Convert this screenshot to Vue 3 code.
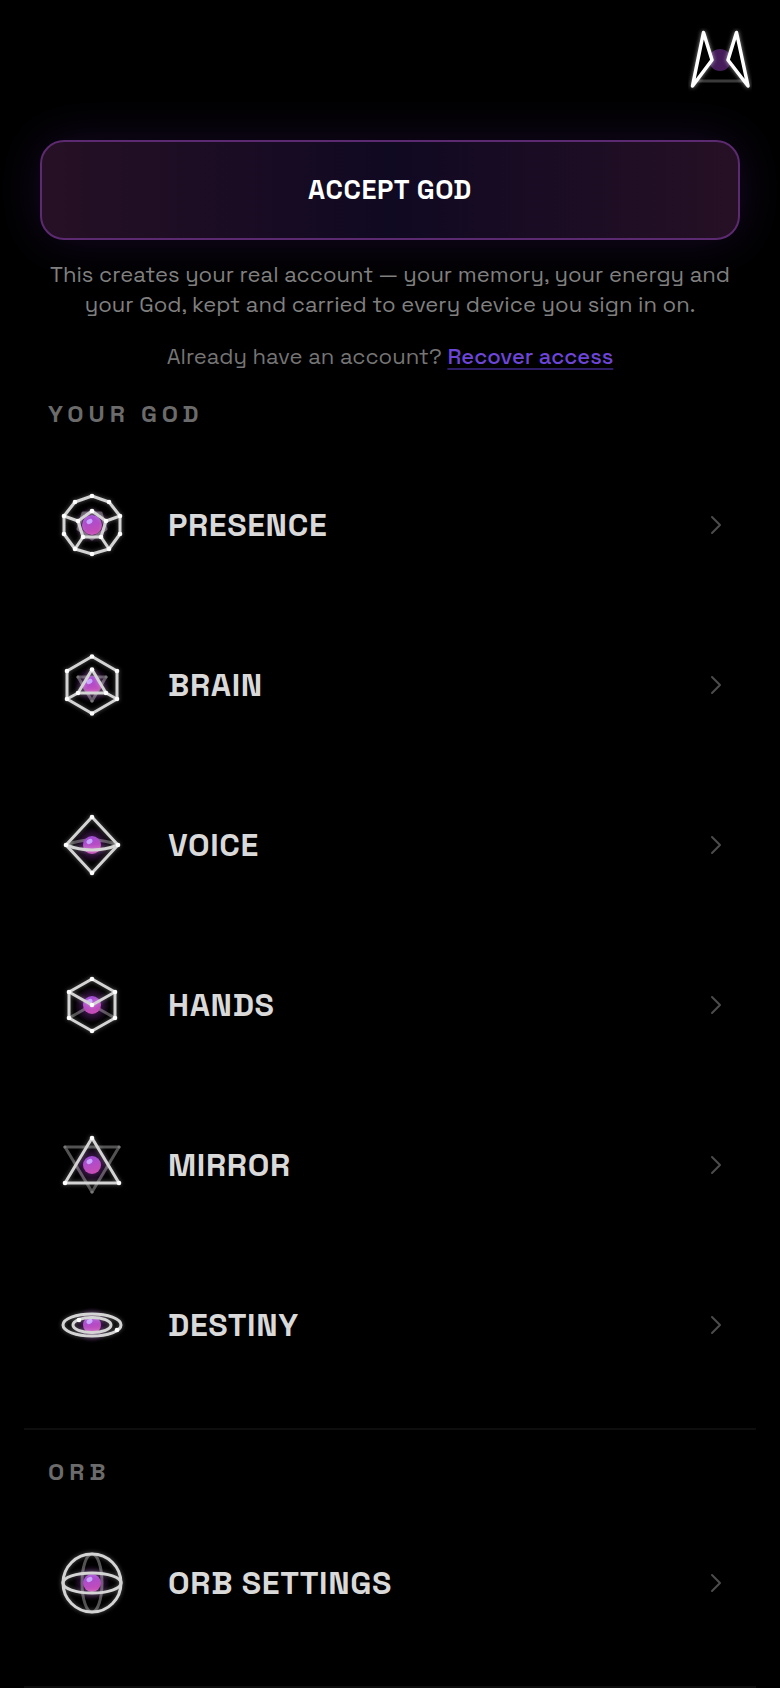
<script setup>
const dots = (list) => list.map(([x, y]) => ({ x, y }))

const godItems = [
  {
    label: 'PRESENCE',
    core: 10,
    faint: ['M0 14 -14 4 -9 -12 9 -12 14 4Z'],
    lines: [
      'M0 -29 17 -23 28 -9 28 9 17 24 0 29 -17 24 -28 9 -28 -9 -17 -23Z',
      'M0 -14 14 -4 9 12 -9 12 -14 -4Z',
      'M14 -4 28 -9M-14 -4 -28 -9M9 12 17 24M-9 12 -17 24'
    ],
    dots: dots([[0, -29], [17, -23], [28, -9], [28, 9], [17, 24], [0, 29], [-17, 24], [-28, 9], [-28, -9], [-17, -23], [0, -14], [14, -4], [9, 12], [-9, 12], [-14, -4]])
  },
  {
    label: 'BRAIN',
    core: 9,
    faint: ['M-14 -8 14 -8 0 16Z'],
    lines: [
      'M0 -28.500 25 -14 25 14 0 28.500 -25 14 -25 -14Z',
      'M0 -15.500 14 8 -14 8Z',
      'M14 8 25 14M-14 8 -25 14'
    ],
    dots: dots([[0, -28.5], [25, -14], [25, 14], [0, 28.5], [-25, 14], [-25, -14], [0, -15.5], [14, 8], [-14, 8]]),
    faintDots: dots([[-14, -8], [14, -8], [0, 16]])
  },
  {
    label: 'VOICE',
    core: 9,
    faint: ['M-26 0Q0 -10 26 0'],
    lines: ['M0 -28 26 0 0 28 -26 0Z', 'M-26 0Q0 10 26 0'],
    dots: dots([[0, -28], [26, 0], [0, 28], [-26, 0]])
  },
  {
    label: 'HANDS',
    core: 9,
    faint: ['M0 0 -23 13M0 0 23 13'],
    lines: ['M0 -26 23 -13 23 13 0 26 -23 13 -23 -13Z', 'M-23 -13 0 0 23 -13'],
    dots: dots([[0, -26], [23, -13], [23, 13], [0, 26], [-23, 13], [-23, -13], [0, 0]])
  },
  {
    label: 'MIRROR',
    core: 9,
    faint: ['M-27 -18 27 -18 0 27Z'],
    lines: ['M0 -27 27 18 -27 18Z'],
    dots: dots([[0, -27], [27, 18], [-27, 18]]),
    faintDots: dots([[-27, -18], [27, -18], [0, 27]])
  },
  {
    label: 'DESTINY',
    core: 9,
    faint: [],
    lines: ['M-29 0A29 11 0 1 0 29 0A29 11 0 1 0 -29 0Z', 'M-19 0A19 7.500 0 1 0 19 0A19 7.500 0 1 0 -19 0Z'],
    dots: dots([[25, 5], [-13, -5]])
  }
]

const orbItems = [
  {
    label: 'ORB SETTINGS',
    core: 9,
    faint: ['M0 -29A10 29 0 1 0 0 29A10 29 0 1 0 0 -29Z'],
    lines: ['M0 -29A29 29 0 1 0 0 29A29 29 0 1 0 0 -29Z', 'M-29 0A29 10 0 1 0 29 0A29 10 0 1 0 -29 0Z'],
    dots: []
  }
]

const sections = [
  { title: 'YOUR GOD', items: godItems },
  { title: 'ORB', items: orbItems }
]
</script>

<template>
  <main class="page">
    <header class="top">
      <button class="logo" type="button" aria-label="Home">
        <svg viewBox="0 0 64 64" width="64" height="64" aria-hidden="true">
          <defs>
            <linearGradient id="core" x1="0" y1="0" x2="0.300" y2="1">
              <stop offset="0" stop-color="#9c4cdc" />
              <stop offset="1" stop-color="#c64cb6" />
            </linearGradient>
            <radialGradient id="halo">
              <stop offset="0.400" stop-color="#9a3cc0" stop-opacity="0.400" />
              <stop offset="1" stop-color="#9a3cc0" stop-opacity="0" />
            </radialGradient>
          </defs>
          <path d="M8 53H56" stroke="#3a3a3a" stroke-width="3" />
          <circle cx="32" cy="32" r="11" fill="#451c59" />
          <g class="logo-wings" fill="#000" stroke="#fff" stroke-width="3.500" stroke-linejoin="round">
            <path d="M15.500 4.500 24 32 4.500 58Z" />
            <path d="M48.500 4.500 40 32 60 58Z" />
          </g>
        </svg>
      </button>
    </header>

    <section class="account">
      <button class="accept" type="button">ACCEPT GOD</button>
      <p class="note">This creates your real account — your memory, your energy and your God, kept and carried to every device you sign in on.</p>
      <p class="recover">Already have an account? <a href="#recover">Recover access</a></p>
    </section>

    <section v-for="section in sections" :key="section.title" class="group">
      <h2>{{ section.title }}</h2>
      <button v-for="item in section.items" :key="item.label" class="row" type="button">
        <svg class="glyph" viewBox="-36 -36 72 72" width="72" height="72" aria-hidden="true">
          <circle r="18" fill="url(#halo)" />
          <path v-for="d in item.faint" :key="d" :d="d" class="faint" />
          <circle :r="item.core" fill="url(#core)" />
          <ellipse cx="-2.500" cy="-3.500" rx="3.200" ry="2.200" transform="rotate(-30 -2.500 -3.500)" fill="#c9a5ff" />
          <g class="wire">
            <path v-for="d in item.lines" :key="d" :d="d" />
            <circle v-for="(p, i) in item.dots" :key="i" :cx="p.x" :cy="p.y" r="2.300" />
          </g>
          <circle v-for="(p, i) in item.faintDots" :key="i" :cx="p.x" :cy="p.y" r="1.600" fill="#777" />
        </svg>
        <span class="label">{{ item.label }}</span>
        <svg class="chevron" viewBox="0 0 12 20" width="12" height="20" aria-hidden="true">
          <path d="M2 2 10 10 2 18" fill="none" stroke="#4c4c4c" stroke-width="2" stroke-linecap="round" stroke-linejoin="round" />
        </svg>
      </button>
    </section>
  </main>
</template>

<style>
html,
body {
  background: #000;
}
</style>

<style scoped>
.page {
  box-sizing: border-box;
  padding: 0 24px;
  background: #000;
  color: #d9d9d9;
  font-family: "Space Grotesk", Inter, "Liberation Sans", sans-serif;
}

button {
  font: inherit;
  color: inherit;
  background: none;
  border: 0;
  padding: 0;
  cursor: pointer;
}

.top {
  display: flex;
  justify-content: flex-end;
  padding: 28px 4px 48px 0;
}

.logo {
  display: block;
  width: 64px;
  height: 64px;
}

.logo svg {
  display: block;
}

.logo-wings {
  filter: drop-shadow(0 0 2px rgba(255, 255, 255, 0.6));
}

.account {
  padding: 0 16px;
  text-align: center;
}

.accept {
  box-sizing: border-box;
  display: block;
  width: 100%;
  min-height: 100px;
  padding-bottom: 2px;
  border: 2px solid #5c2a70;
  border-radius: 24px;
  background: linear-gradient(90deg, #261025, #100922 50%, #261025);
  box-shadow: 0 0 48px rgba(110, 50, 190, 0.2);
  color: #fff;
  font-size: 27px;
  font-weight: 700;
  letter-spacing: 0.02em;
}

.note,
.recover {
  margin: 0;
  font-size: 22px;
  line-height: 30px;
  color: #808080;
}

.note {
  padding-top: 19px;
}

.recover {
  padding-top: 22px;
  color: #757575;
}

.recover a {
  color: #6d45d8;
  font-weight: 500;
  text-decoration: underline 2px #2d1c66;
  text-underline-offset: 4px;
}

.group {
  padding-bottom: 23px;
  border-bottom: 2px solid #0e0e0e;
}

.group h2 {
  margin: 0;
  padding: 27px 24px 16px;
  font-size: 24px;
  line-height: 30px;
  font-weight: 700;
  letter-spacing: 5px;
  color: #6b6b6b;
}

.account + .group h2 {
  padding-top: 28px;
}

.row {
  display: flex;
  align-items: center;
  gap: 40px;
  width: 100%;
  min-height: 160px;
  padding: 0 34px 0 32px;
  text-align: left;
}

.glyph {
  flex: none;
}

.label {
  flex: 1;
  font-size: 32px;
  line-height: 40px;
  font-weight: 700;
  letter-spacing: 0.02em;
}

.chevron {
  flex: none;
}

.wire {
  filter: drop-shadow(0 0 2px rgba(255, 255, 255, 0.35));
}

.wire path {
  fill: none;
  stroke: #d4d4d4;
  stroke-width: 3;
  stroke-linejoin: round;
}

.wire circle {
  fill: #fff;
}

.faint {
  fill: none;
  stroke: #fff;
  stroke-opacity: 0.32;
  stroke-width: 3;
  stroke-linejoin: round;
}
</style>
